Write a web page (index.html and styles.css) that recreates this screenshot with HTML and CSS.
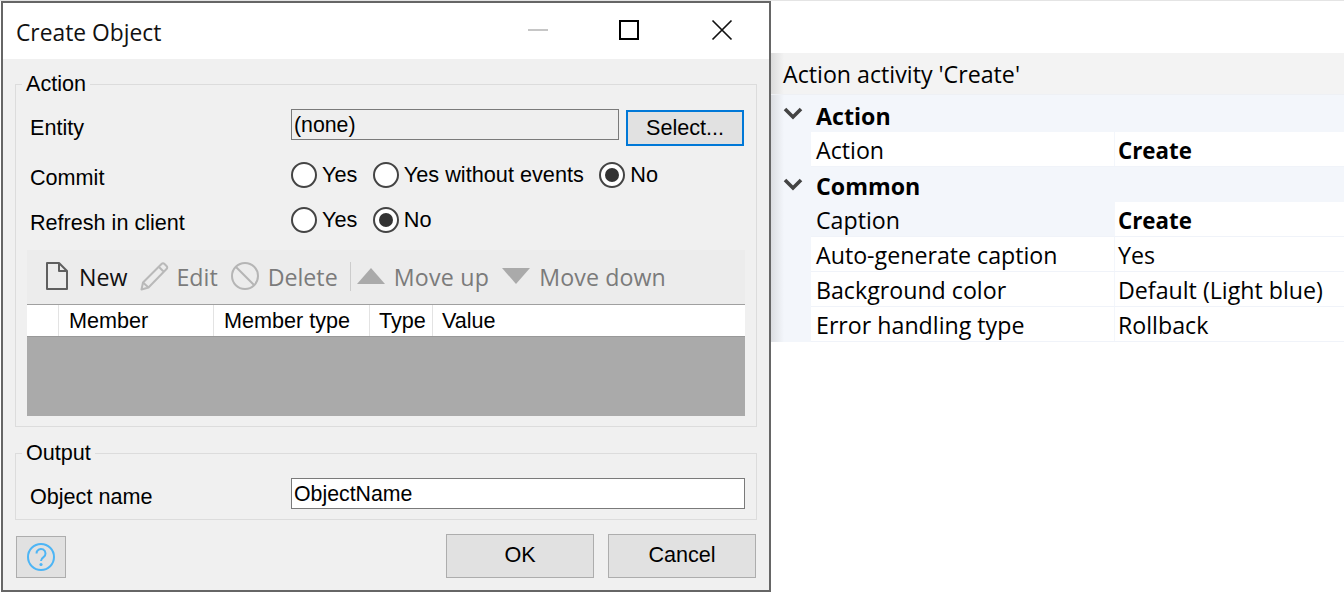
FILE: index.html
```html
<!DOCTYPE html>
<html lang="en">
<head>
<meta charset="utf-8">
<title>Create Object</title>
<link rel="stylesheet" href="styles.css">
</head>
<body>
<section class="props">
  <div class="props-head">Action activity 'Create'</div>
  <div class="grp first"><svg class="chev" viewBox="0 0 20 13"><path d="M2 2l8 8 8-8" /></svg><b>Action</b></div>
  <div class="row"><span class="k">Action</span><span class="v"><b>Create</b></span></div>
  <div class="grp"><svg class="chev" viewBox="0 0 20 13"><path d="M2 2l8 8 8-8" /></svg><b>Common</b></div>
  <div class="row sel"><span class="k">Caption</span><span class="v"><b>Create</b></span></div>
  <div class="row"><span class="k">Auto-generate caption</span><span class="v">Yes</span></div>
  <div class="row"><span class="k">Background color</span><span class="v">Default (Light blue)</span></div>
  <div class="row"><span class="k">Error handling type</span><span class="v">Rollback</span></div>
</section>

<section class="dialog">
  <header class="titlebar">
    <span class="title">Create Object</span>
    <svg class="winbtns" width="220" height="24" viewBox="0 0 220 24">
      <path d="M12 12h20" stroke="#c6c6c6" stroke-width="2" fill="none"/>
      <path d="M104 3h18v18h-18z" stroke="#000" stroke-width="2" fill="none"/>
      <path d="M196.500 2.500l19 19M215.500 2.500l-19 19" stroke="#111" stroke-width="1.700" fill="none"/>
    </svg>
  </header>
  <div class="body">
    <fieldset class="box action">
      <legend>Action</legend>
      <div class="form-row entity">
        <label>Entity</label>
        <div class="field readonly">(none)</div>
        <button class="btn select" type="button">Select...</button>
      </div>
      <div class="form-row commit">
        <label>Commit</label>
        <span class="radio"></span><span class="opt">Yes</span>
        <span class="radio"></span><span class="opt">Yes without events</span>
        <span class="radio on"></span><span class="opt">No</span>
      </div>
      <div class="form-row refresh">
        <label>Refresh in client</label>
        <span class="radio"></span><span class="opt">Yes</span>
        <span class="radio on"></span><span class="opt">No</span>
      </div>
      <div class="toolbar">
        <span class="tool new">
          <svg width="24" height="30" viewBox="0 0 24 30"><path d="M2 2h12l8 8v18H2z M14 2v8h8" fill="none" stroke="#5f5f5f" stroke-width="2" stroke-linejoin="round"/></svg>New</span>
        <span class="tool edit">
          <svg width="30" height="30" viewBox="0 0 30 30"><path d="M2.500 28.500l1.500-7L22.500 3c1-1 2-1 3 0l2 2c1 1 1 2 0 3L9.500 26.500zM4 21.500l5.500 5M20 6l5 5" fill="none" stroke="#b9b9b9" stroke-width="2" stroke-linejoin="round"/></svg>Edit</span>
        <span class="tool">
          <svg width="30" height="30" viewBox="0 0 30 30"><circle cx="15" cy="15" r="13" fill="none" stroke="#b5b5b5" stroke-width="2"/><path d="M6 6l18 18" stroke="#b5b5b5" stroke-width="2"/></svg>Delete</span>
        <span class="sep"></span>
        <span class="tool up">
          <svg width="28" height="16" viewBox="0 0 28 16"><path d="M14 0l14 16H0z" fill="#aaa"/></svg>Move up</span>
        <span class="tool down">
          <svg width="28" height="16" viewBox="0 0 28 16"><path d="M0 0h28L14 16z" fill="#aaa"/></svg>Move down</span>
      </div>
      <div class="grid">
        <div class="grid-head">
          <span class="c0"></span><span class="c1">Member</span><span class="c2">Member type</span><span class="c3">Type</span><span class="c4">Value</span>
        </div>
        <div class="grid-empty"></div>
      </div>
    </fieldset>
    <fieldset class="box output">
      <legend>Output</legend>
      <div class="form-row name">
        <label>Object name</label>
        <div class="field">ObjectName</div>
      </div>
    </fieldset>
    <footer class="foot">
      <button class="btn help" type="button" aria-label="Help">
        <svg width="30" height="30" viewBox="0 0 30 30"><circle cx="15" cy="15" r="13" fill="none" stroke="#4db5f5" stroke-width="2"/><path d="M10.500 11.500a4.500 4.500 0 1 1 7 3.700c-1.600 1.100-2.500 1.900-2.500 3.800" fill="none" stroke="#4db5f5" stroke-width="2"/><circle cx="15" cy="22.500" r="1.600" fill="#4db5f5"/></svg>
      </button>
      <button class="btn big" type="button">OK</button>
      <button class="btn big last" type="button">Cancel</button>
    </footer>
  </div>
</section>
</body>
</html>
```
FILE: styles.css
```css
* { box-sizing: border-box; }
html, body { margin: 0; height: 100%; }
body {
  position: relative;
  width: 1344px;
  height: 593px;
  overflow: hidden;
  background: #fff;
  border-top: 1px solid #e4e4e4;
  font-family: "Liberation Sans", Arial, sans-serif;
  color: #000;
}

/* property panel behind the dialog */
.props {
  position: absolute;
  left: 771px;
  top: 52px;
  width: 573px;
  font-family: "Open Sans", "Noto Sans", sans-serif;
  font-size: 23.2px;
  background: linear-gradient(90deg, #dcdee2 0, #f3f6fb 13px);
}
.props-head {
  height: 42px;
  padding: 5px 0 0 12px;
  line-height: 32px;
  background: linear-gradient(90deg, #dcdcdc 0, #f3f3f3 13px);
  border-bottom: 1px solid #eef0f4;
}
.grp {
  height: 35px;
  display: flex;
  align-items: center;
}
.grp.first { height: 37px; }
.grp b { font-weight: 700; margin-left: 13px; padding-top: 2px; }
.grp.first b { padding-top: 4px; }
.chev { width: 20px; height: 13px; margin-left: 12px; fill: none; stroke: #444; stroke-width: 3.600; flex: none; }
.row {
  display: flex;
  height: 35px;
  margin-left: 40px;
  line-height: 37px;
  border-bottom: 1px solid #f0f3f9;
  background: #fff;
}
.row.sel .k { background: #f3f6fb; }
.k { width: 304px; padding-left: 5px; border-right: 1px solid #f3f6fb; }
.v { flex: 1; padding-left: 3px; }
.v b { font-weight: 700; font-size: 22.300px; }

/* dialog window */
.dialog {
  position: absolute;
  left: 1px;
  top: 0;
  width: 770px;
  height: 591px;
  display: flex;
  flex-direction: column;
  border: 2px solid #666;
  background: #f0f0f0;
}
.titlebar {
  height: 56px;
  flex: none;
  background: #fff;
  display: flex;
  align-items: center;
  justify-content: space-between;
  padding: 0 33px 0 13px;
}
.title { font-family: "Open Sans", "Noto Sans", sans-serif; font-size: 22.800px; color: #111; margin-top: 2px; }
.winbtns { display: block; margin-top: -2px; }
.body { flex: 1; padding: 0 12px; display: flex; flex-direction: column; font-size: 21.600px; }

.box {
  margin: 0;
  padding: 0 11px;
  border: 1px solid #dcdcdc;
  min-width: 0;
  flex: none;
}
.box legend {
  margin-left: -5px;
  padding: 0 4px;
  line-height: 24px;
  font-size: 21.600px;
}
.action { margin-top: 13px; height: 355px; }
.output { margin-top: 14px; height: 79px; }

.form-row { display: flex; align-items: center; }
.form-row label { width: 264px; padding-left: 3px; flex: none; position: relative; top: 3px; }
.entity { align-items: flex-start; margin-top: 13px; height: 38px; }
.entity label { top: 0; line-height: 38px; }
.field {
  height: 31px;
  line-height: 31px;
  padding-left: 2px;
  border: 1px solid #7a7a7a;
  background: #fff;
  flex: 1;
  font-size: 21.300px;
}
.field.readonly { background: #efefef; flex: none; width: 328px; }
.btn {
  font: inherit;
  color: #000;
  background: #e1e1e1;
  border: 1px solid #adadad;
  border-radius: 0;
  padding: 0;
}
.select { width: 118px; height: 36px; margin: 1px 0 0 7px; border: 2px solid #0078d7; }
.commit { height: 26px; margin-top: 15px; }
.refresh { height: 26px; margin-top: 19px; }
.radio {
  width: 26px;
  height: 26px;
  flex: none;
  border: 2px solid #444;
  border-radius: 50%;
  background: #fff;
  position: relative;
}
.radio.on::after {
  content: "";
  position: absolute;
  inset: 4px;
  border-radius: 50%;
  background: #333;
}
.opt { margin: 0 15.400px 0 5px; font-size: 21.700px; }

.toolbar {
  margin-top: 17px;
  height: 54px;
  background: #ececec;
  display: flex;
  align-items: center;
  padding-left: 18px;
  font-family: "Open Sans", "Noto Sans", sans-serif;
  font-size: 23.200px;
  color: #7b7b7b;
}
.tool { display: flex; align-items: center; gap: 8px; margin-right: 12px; }
.tool svg { margin-top: -2px; }
.tool.new { color: #111; gap: 10px; }
.tool.edit { gap: 7px; }
.tool.up { gap: 9px; margin-right: 13px; letter-spacing: 0.250px; }
.tool.down { gap: 9px; letter-spacing: 0.100px; }
.sep { width: 1px; height: 29px; background: #ccc; margin: -2px 6px 0 0; }
.grid { border-top: 1px solid #a0a0a0; height: 112px; display: flex; flex-direction: column; }
.grid-head { height: 31px; background: #fff; display: flex; line-height: 31px; flex: none; }
.grid-head span { padding-left: 10px; border-right: 1px solid #e3e3e3; }
.c0 { width: 32px; }
.c1 { width: 155px; }
.c2 { width: 156px; }
.c3 { width: 63px; }
.grid-head .c3 { padding-left: 9px; }
.grid-head .c4 { flex: 1; border-right: 0; padding-left: 9px; }
.grid-empty { flex: 1; background: #aaa; border-top: 1px solid #999; }

.name { height: 31px; margin-top: 13px; }
.foot { display: flex; align-items: flex-start; margin-top: 14px; }
.help { width: 50px; height: 42px; margin: 2px auto 0 1px; display: flex; align-items: center; justify-content: center; }
.big { width: 148px; height: 44px; margin-left: 14px; padding-bottom: 2px; }
.big.last { margin-right: 1px; }
```
